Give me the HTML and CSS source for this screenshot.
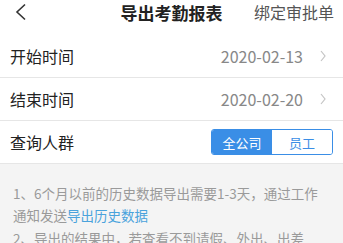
FILE: index.html
```html
<!DOCTYPE html>
<html lang="zh">
<head>
<meta charset="utf-8">
<link rel="stylesheet" href="styles.css">
</head>
<body>
<div class="page">
  <header class="nav">
    <span class="back"><svg width="14" height="18" viewBox="0 0 14 18"><polyline points="11,1.5 3,9 11,16.5" fill="none" stroke="#333" stroke-width="1.6"/></svg></span>
    <span class="title">导出考勤报表</span>
    <span class="action">绑定审批单</span>
  </header>
  <div class="list">
    <div class="row">
      <span class="label">开始时间</span>
      <span class="value">2020-02-13</span>
      <span class="chev"><svg width="6" height="12" viewBox="0 0 6 12"><polyline points="1,1 5,6 1,11" fill="none" stroke="#c4c4c4" stroke-width="1.2"/></svg></span>
    </div>
    <div class="row">
      <span class="label">结束时间</span>
      <span class="value">2020-02-20</span>
      <span class="chev"><svg width="6" height="12" viewBox="0 0 6 12"><polyline points="1,1 5,6 1,11" fill="none" stroke="#c4c4c4" stroke-width="1.2"/></svg></span>
    </div>
    <div class="row">
      <span class="label">查询人群</span>
      <div class="seg">
        <span class="seg-item active">全公司</span>
        <span class="seg-item">员工</span>
      </div>
    </div>
  </div>
  <div class="notes">
    <p>1、6个月以前的历史数据导出需要1-3天，通过工作通知发送<span class="link">导出历史数据</span></p>
    <p>2、导出的结果中，若查看不到请假、外出、出差</p>
  </div>
</div>
</body>
</html>
```
FILE: styles.css
```css
html, body {
  margin: 0;
  padding: 0;
  background: #f4f4f4;
}
.page {
  font-family: "Noto Sans CJK SC", "Noto Sans", sans-serif;
  width: 343px;
  height: 243px;
  overflow: hidden;
  background: #f4f4f4;
}
.nav {
  height: 35px;
  background: #fff;
  display: flex;
  align-items: flex-start;
  position: relative;
}
.back {
  margin-left: 14px;
  margin-top: 3px;
  height: 18px;
  display: flex;
}
.title {
  position: absolute;
  left: 0;
  right: 0;
  top: 0;
  text-align: center;
  font-size: 17px;
  line-height: 25px;
  font-weight: bold;
  color: #222;
  pointer-events: none;
}
.action {
  margin-left: auto;
  margin-right: 9px;
  font-size: 16px;
  line-height: 25px;
  color: #555;
}
.list {
  background: #fff;
}
.row {
  height: 42px;
  border-bottom: 1px solid #e6e6e6;
  display: flex;
  align-items: center;
  padding: 0 17px 0 10px;
}
.label {
  font-size: 16px;
  color: #222;
}
.value {
  margin-left: auto;
  font-size: 16px;
  color: #888;
}
.chev {
  margin-left: 17px;
  display: flex;
}
.seg {
  margin-left: auto;
  margin-right: -7px;
  display: flex;
  width: 122px;
  height: 26px;
  border: 1px solid #3a8ee6;
  border-radius: 3px;
  box-sizing: border-box;
  overflow: hidden;
}
.seg-item {
  flex: 1;
  display: flex;
  align-items: center;
  justify-content: center;
  font-size: 13px;
  color: #3a8ee6;
  background: #fff;
}
.seg-item.active {
  background: #3a8ee6;
  color: #fff;
}
.notes {
  padding: 18px 13px 0 13px;
}
.notes p {
  margin: 0 0 1px 0;
  font-size: 13.5px;
  line-height: 22px;
  color: #9a9a9a;
}
.link {
  color: #4aa3dc;
}
```
